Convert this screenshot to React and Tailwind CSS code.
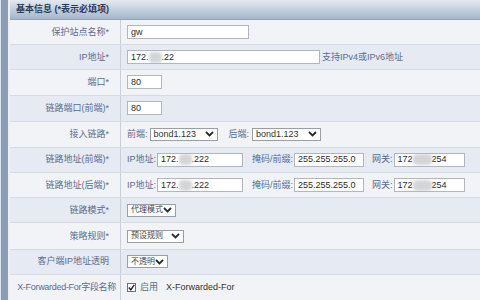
import React from "react";

const Blur = ({ w = 14 }) => (
  <span className="inline-block h-[11px] bg-[#d4d5d7] blur-[1.5px] rounded-sm" style={{ width: w }} />
);

const Input = ({ w, children }) => (
  <div
    className="h-[14px] bg-white border border-[#b3b7bd] flex items-center pl-[3px] text-[#2b2b2b] whitespace-nowrap overflow-hidden"
    style={{ width: w }}
  >
    {children}
  </div>
);

const Chevron = () => (
  <svg width="9" height="6" viewBox="0 0 9 6" className="shrink-0">
    <polyline points="1,1 4.5,4.5 8,1" fill="none" stroke="#2b2b2b" strokeWidth="1.8" />
  </svg>
);

const Select = ({ w, small, children }) => (
  <div
    className="h-[13px] bg-white border border-[#9a9fa6] flex items-center justify-between pl-[3px] pr-[3px] text-[#333] whitespace-nowrap"
    style={{ width: w }}
  >
    <span className={small ? "text-[8px] text-[#444]" : ""}>{children}</span>
    <Chevron />
  </div>
);

const Lbl = ({ children }) => <span className="text-[#5a6d91] whitespace-nowrap">{children}</span>;

const Row = ({ label, h = 26, blue, children }) => (
  <div
    className={`flex border-b border-[#d6dbe2] ${blue ? "bg-[#e6eaf2]" : "bg-[#f2f3f6]"}`}
    style={{ height: h }}
  >
    <div className="w-[111px] shrink-0 flex items-center justify-end pr-[11px] border-r border-[#c8cfd9] text-[#5a6d91] whitespace-nowrap">
      {label}
    </div>
    <div className="flex items-center pl-[6px]">{children}</div>
  </div>
);

export default function App() {
  return (
    <div className="w-[480px] h-[300px] overflow-hidden flex bg-[#f2f3f6] text-[9px] leading-none font-['Liberation_Sans_Narrow','Liberation_Sans','Noto_Sans_CJK_SC',sans-serif]">
      <div className="w-[1px] shrink-0 bg-[#dfe3ea]" />
      <div className="w-[7px] shrink-0 bg-[#8b9cb6]" />
      <div className="w-[2px] shrink-0 bg-[#eceff3]" />
      <div className="flex-1 flex flex-col">
        <div className="h-[20px] shrink-0 flex items-center pl-[6px] bg-gradient-to-b from-[#e4e9f0] to-[#a5b6ca] border-b border-[#93a4ba] font-bold text-[#2a3b5c] text-[9px]">
          基本信息 (*表示必填项)
        </div>
        <Row label="保护站点名称*" h={26}>
          <Input w={122}>gw</Input>
        </Row>
        <Row label="IP地址*" h={26} blue>
          <Input w={193}>
            172.<Blur w={13} />.22
          </Input>
          <span className="ml-[2px] text-[#5a6d91]">支持IPv4或IPv6地址</span>
        </Row>
        <Row label="端口*" h={26}>
          <Input w={35}>80</Input>
        </Row>
        <Row label="链路端口(前端)*" h={27} blue>
          <Input w={35}>80</Input>
        </Row>
        <Row label="接入链路*" h={27}>
          <Lbl>前端:</Lbl>
          <div className="ml-[2px]">
            <Select w={68}>bond1.123</Select>
          </div>
          <div className="ml-[11px]">
            <Lbl>后端:</Lbl>
          </div>
          <div className="ml-[3px]">
            <Select w={69}>bond1.123</Select>
          </div>
        </Row>
        {["链路地址(前端)*", "链路地址(后端)*"].map((l, i) => (
          <Row key={l} label={l} h={26} blue={i === 0}>
            <Lbl>IP地址:</Lbl>
            <div className="ml-[1px]">
              <Input w={86}>
                172.<Blur w={13} />.222
              </Input>
            </div>
            <div className="ml-[9px]">
              <Lbl>掩码/前缀:</Lbl>
            </div>
            <div className="ml-[1px]">
              <Input w={70}>255.255.255.0</Input>
            </div>
            <div className="ml-[8px]">
              <Lbl>网关:</Lbl>
            </div>
            <div className="ml-[1px]">
              <Input w={71}>
                172<Blur w={19} />254
              </Input>
            </div>
          </Row>
        ))}
        <Row label="链路模式*" h={26} blue>
          <Select w={49} small>代理模式</Select>
        </Row>
        <Row label="策略规则*" h={27}>
          <Select w={57} small>预设规则</Select>
        </Row>
        <Row label="客户端IP地址透明" h={26} blue>
          <Select w={41} small>不透明</Select>
        </Row>
        <div className="flex h-[26px] bg-[#f2f3f6]">
          <div className="w-[111px] shrink-0 flex items-center justify-end pr-[4px] border-r border-[#c8cfd9] text-[#5a6d91] whitespace-nowrap tracking-[-0.3px]">
            X-Forwarded-For字段名称
          </div>
          <div className="flex items-center pl-[6px]">
            <div className="w-[9px] h-[9px] border border-[#6d7278] bg-white flex items-center justify-center">
              <svg width="7" height="7" viewBox="0 0 7 7">
                <polyline points="0.8,3.5 2.8,5.8 6.2,0.8" fill="none" stroke="#222" strokeWidth="1.4" />
              </svg>
            </div>
            <span className="ml-[4px] text-[#5a6d91]">启用</span>
            <span className="ml-[8px] text-[#333]">X-Forwarded-For</span>
          </div>
        </div>
      </div>
    </div>
  );
}
